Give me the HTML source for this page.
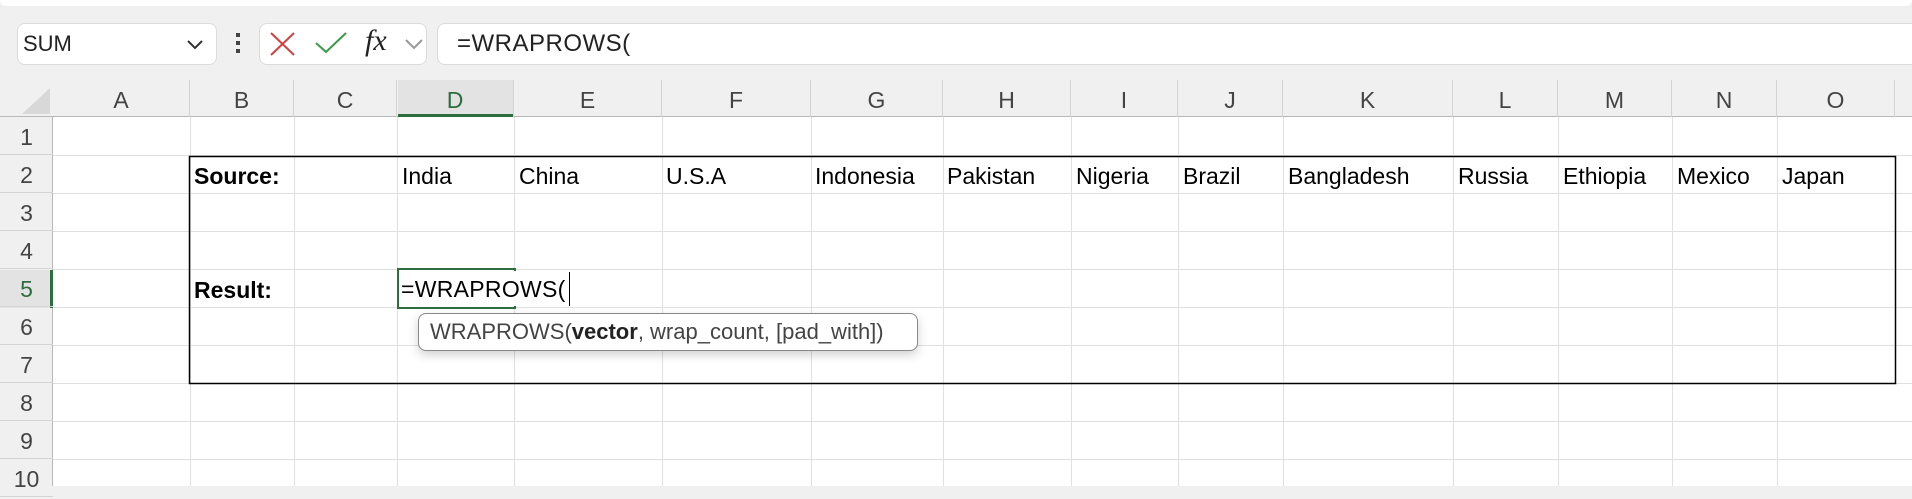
<!DOCTYPE html>
<html><head><style>
*{margin:0;padding:0;box-sizing:border-box}
body{width:1912px;height:486px;overflow:hidden;background:#f0f0f0;font-family:"Liberation Sans",sans-serif;position:relative}
.abs{position:absolute}
.box{position:absolute;background:#fff;border:1px solid #dcdcdc;border-radius:8px}
.ch{position:absolute;top:80px;height:37px;font-size:23px;color:#444;text-align:center;line-height:40px;border-right:1px solid #d4d4d4}
.rh{position:absolute;left:0;width:53px;font-size:23px;color:#444;text-align:center;line-height:40px;border-bottom:1px solid #d4d4d4}
.t{position:absolute;font-size:23px;color:#000;line-height:38px;white-space:nowrap}
</style></head><body>
<div class="abs" style="left:0;top:0;width:1912px;height:6px;background:#fff;border-radius:0 0 8px 8px"></div>
<div class="box" style="left:17px;top:23px;width:200px;height:42px"></div>
<div class="t" style="left:23px;top:25px;font-size:22px;color:#222">SUM</div>
<svg class="abs" style="left:186px;top:38px" width="18" height="12"><path d="M2 3 L9 10 L16 3" fill="none" stroke="#333" stroke-width="2"/></svg>
<div class="abs" style="left:236px;top:33px;width:4px;height:4px;background:#444"></div>
<div class="abs" style="left:236px;top:41px;width:4px;height:4px;background:#444"></div>
<div class="abs" style="left:236px;top:49px;width:4px;height:4px;background:#444"></div>
<div class="box" style="left:259px;top:23px;width:168px;height:42px"></div>
<svg class="abs" style="left:268px;top:30px" width="30" height="28"><path d="M3 3 L26 25 M26 3 L3 25" stroke="#d04040" stroke-width="2"/></svg>
<svg class="abs" style="left:313px;top:30px" width="36" height="26"><path d="M3 13 L13 22 L33 3" fill="none" stroke="#3a9a4a" stroke-width="2"/></svg>
<div class="abs" style="left:365px;top:24px;font-family:'Liberation Serif',serif;font-style:italic;font-size:30px;color:#222">fx</div>
<svg class="abs" style="left:404px;top:38px" width="20" height="12"><path d="M2 2 L10 10 L18 2" fill="none" stroke="#999" stroke-width="2"/></svg>
<div class="box" style="left:437px;top:23px;width:1490px;height:42px"></div>
<div class="t" style="left:457px;top:25px;font-size:24px;color:#222;letter-spacing:0.5px">=WRAPROWS(</div>
<div class="abs" style="left:0;top:80px;width:1912px;height:37px;background:#f0f0f0;border-bottom:1px solid #b8b8b8"></div>
<svg class="abs" style="left:20px;top:86px" width="32" height="30"><path d="M30 2 L30 28 L2 28 Z" fill="#d8d8d8"/></svg>
<div class="abs" style="left:0;top:117px;width:53px;height:369px;background:#f0f0f0;border-right:1px solid #b8b8b8"></div>
<div class="abs" style="left:53px;top:117px;width:1859px;height:369px;background:#fff"></div>
<svg class="abs" style="left:0;top:0" width="1912" height="486">
<g stroke="#e0e0e0" stroke-width="1">
<path d="M190.5 117V486M294.5 117V486M397.5 117V486M514.5 117V486M662.5 117V486M811.5 117V486M943.5 117V486M1071.5 117V486M1178.5 117V486M1283.5 117V486M1453.5 117V486M1558.5 117V486M1672.5 117V486M1777.5 117V486"/>
<path d="M53 155.5H1912M53 193.5H1912M53 231.5H1912M53 269.5H1912M53 307.5H1912M53 345.5H1912M53 383.5H1912M53 421.5H1912M53 459.5H1912"/>
</g>
<rect x="189.5" y="156.5" width="1706" height="227" fill="none" stroke="#000" stroke-width="1.5"/>
</svg>
<div class="abs" style="left:398px;top:80px;width:116px;height:37px;background:#e3e3e3;border-bottom:3px solid #2e6e3e"></div>
<div class="abs" style="left:50px;top:270px;width:3px;height:38px;background:#2e6e3e"></div>
<div class="abs" style="left:0;top:270px;width:50px;height:38px;background:#e3e3e3"></div>
<div class="ch" style="left:53px;width:137px">A</div>
<div class="ch" style="left:190px;width:104px">B</div>
<div class="ch" style="left:294px;width:103px">C</div>
<div class="ch" style="left:397px;width:117px;color:#2e6e3e">D</div>
<div class="ch" style="left:514px;width:148px">E</div>
<div class="ch" style="left:662px;width:149px">F</div>
<div class="ch" style="left:811px;width:132px">G</div>
<div class="ch" style="left:943px;width:128px">H</div>
<div class="ch" style="left:1071px;width:107px">I</div>
<div class="ch" style="left:1178px;width:105px">J</div>
<div class="ch" style="left:1283px;width:170px">K</div>
<div class="ch" style="left:1453px;width:105px">L</div>
<div class="ch" style="left:1558px;width:114px">M</div>
<div class="ch" style="left:1672px;width:105px">N</div>
<div class="ch" style="left:1777px;width:118px">O</div>
<div class="rh" style="top:117px;height:38px">1</div>
<div class="rh" style="top:155px;height:38px">2</div>
<div class="rh" style="top:193px;height:38px">3</div>
<div class="rh" style="top:231px;height:38px">4</div>
<div class="rh" style="top:269px;height:38px;color:#2e6e3e">5</div>
<div class="rh" style="top:307px;height:38px">6</div>
<div class="rh" style="top:345px;height:38px">7</div>
<div class="rh" style="top:383px;height:38px">8</div>
<div class="rh" style="top:421px;height:38px">9</div>
<div class="rh" style="top:459px;height:38px">10</div>
<div class="t" style="left:194px;top:157px;font-weight:bold">Source:</div>
<div class="t" style="left:402px;top:157px">India</div>
<div class="t" style="left:519px;top:157px">China</div>
<div class="t" style="left:666px;top:157px">U.S.A</div>
<div class="t" style="left:815px;top:157px">Indonesia</div>
<div class="t" style="left:947px;top:157px">Pakistan</div>
<div class="t" style="left:1076px;top:157px">Nigeria</div>
<div class="t" style="left:1183px;top:157px">Brazil</div>
<div class="t" style="left:1288px;top:157px">Bangladesh</div>
<div class="t" style="left:1458px;top:157px">Russia</div>
<div class="t" style="left:1563px;top:157px">Ethiopia</div>
<div class="t" style="left:1677px;top:157px">Mexico</div>
<div class="t" style="left:1782px;top:157px">Japan</div>
<div class="t" style="left:194px;top:271px;font-weight:bold">Result:</div>
<div class="abs" style="left:397px;top:268px;width:119px;height:41px;border:2.5px solid #2e6e3e"></div>
<div class="abs" style="left:400px;top:271px;width:172px;height:35px;background:#fff"></div>
<div class="t" style="left:401px;top:270px;letter-spacing:0.3px">=WRAPROWS(</div>
<div class="abs" style="left:569px;top:272px;width:1px;height:34px;background:#000"></div>
<div class="abs" style="left:418px;top:313px;width:500px;height:38px;background:#fff;border:1.5px solid #888;border-radius:8px;box-shadow:0 4px 10px rgba(0,0,0,.18)"></div>
<div class="t" style="left:430px;top:313px;font-size:22px;color:#444">WRAPROWS(<b style="color:#222">vector</b>, wrap_count, [pad_with])</div>
</body></html>
